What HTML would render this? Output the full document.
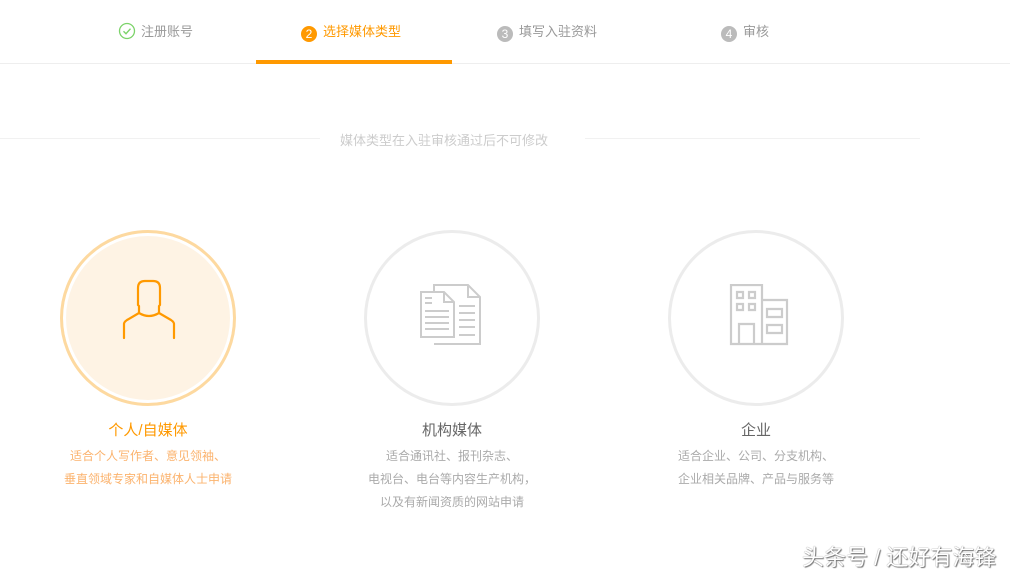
<!DOCTYPE html>
<html><head><meta charset="utf-8"><style>
body{margin:0;width:1010px;height:573px;background:#fff;position:relative;overflow:hidden;font-family:"Liberation Sans","Noto Sans CJK SC",sans-serif}
.a{position:absolute;white-space:nowrap}
.num{display:inline-block;width:16px;height:16px;border-radius:50%;background:#bbb;color:#fff;font-size:12px;line-height:16px;text-align:center;vertical-align:-2px;margin-right:6px}
.tab{font-size:13px;color:#999;top:21px}
.c{position:absolute;width:176px;height:176px;border-radius:50%;border:3px solid #ececec;box-sizing:border-box}
.t{position:absolute;width:300px;text-align:center;font-size:15px;color:#666}
.d{position:absolute;width:300px;text-align:center;font-size:12px;color:#aaa;line-height:23px}
</style></head><body>
<div class="a tab" style="left:118px"><svg width="18" height="18" style="vertical-align:-4px;margin-right:5px"><circle cx="9" cy="9" r="7.5" fill="none" stroke="#7cd36a" stroke-width="1.3"/><path d="M5.5 9.2l2.5 2.5 4.5-5" fill="none" stroke="#7cd36a" stroke-width="1.4"/></svg>注册账号</div>
<div class="a tab" style="left:301px;color:#f90"><span class="num" style="background:#f90">2</span>选择媒体类型</div>
<div class="a tab" style="left:497px"><span class="num">3</span>填写入驻资料</div>
<div class="a tab" style="left:721px"><span class="num">4</span>审核</div>
<div class="a" style="left:0;top:63px;width:1010px;height:1px;background:#eee"></div>
<div class="a" style="left:256px;top:60px;width:196px;height:4px;background:#f90"></div>
<div class="a" style="left:0;top:138px;width:320px;height:1px;background:#f1f1f1"></div>
<div class="a" style="left:585px;top:138px;width:335px;height:1px;background:#f1f1f1"></div>
<div class="a" style="left:340px;top:130px;font-size:13px;color:#ccc">媒体类型在入驻审核通过后不可修改</div>

<div class="c" style="left:60px;top:230px;border-color:#fdd9a0;background:#fef3e4;box-shadow:inset 0 0 0 3px #fff"></div>
<svg class="a" style="left:100px;top:270px" width="100" height="80"><path d="M38 35V18q0-7 7-7h8q7 0 7 7v17l-1 1v7M38 35l1 1v7q10 6 20 0M39 43L27 50q-3 2-3 4v14M59 43l12 7q3 2 3 4v14" fill="none" stroke="#f90" stroke-width="2.2" stroke-linejoin="round" stroke-linecap="round"/></svg>
<div class="c" style="left:364px;top:230px"></div>
<svg class="a" style="left:420px;top:284px" width="64" height="64" fill="none" stroke="#ccc" stroke-width="2"><path d="M14 7V1h34l12 12v47H14"/><path d="M48 1v12h12"/><path d="M1 53V8h23l10 10v35z" fill="#fff"/><path d="M24 8v10h10M5 14h7M5 19h7M5 27h24M5 33h24M5 39h24M5 45h24M39 22h16M39 29h16M39 36h16M39 43h16M39 51h16"/></svg>
<div class="c" style="left:668px;top:230px"></div>
<svg class="a" style="left:728px;top:284px" width="62" height="62" fill="none" stroke="#ccc" stroke-width="2.2"><path d="M3 60V1h31v59zM34 16h25v44H34M9 8h6v6H9zM21 8h6v6h-6zM9 20h6v6H9zM21 20h6v6h-6zM11 60V40h15v20M39 25h15v8H39zM39 41h15v8H39z"/></svg>

<div class="t" style="left:-2px;top:419px;color:#f90">个人/自媒体</div>
<div class="d" style="left:-2px;top:445px;color:#fbb36e">适合个人写作者、意见领袖、<br>垂直领域专家和自媒体人士申请</div>
<div class="t" style="left:302px;top:419px">机构媒体</div>
<div class="d" style="left:302px;top:445px">适合通讯社、报刊杂志、<br>电视台、电台等内容生产机构，<br>以及有新闻资质的网站申请</div>
<div class="t" style="left:606px;top:419px">企业</div>
<div class="d" style="left:606px;top:445px">适合企业、公司、分支机构、<br>企业相关品牌、产品与服务等</div>
<div class="a" style="left:802px;top:540px;font-size:22px;color:#fff;text-shadow:0 0 1px #666,1px 1px 1px #777">头条号 / 还好有海锋</div>
</body></html>
